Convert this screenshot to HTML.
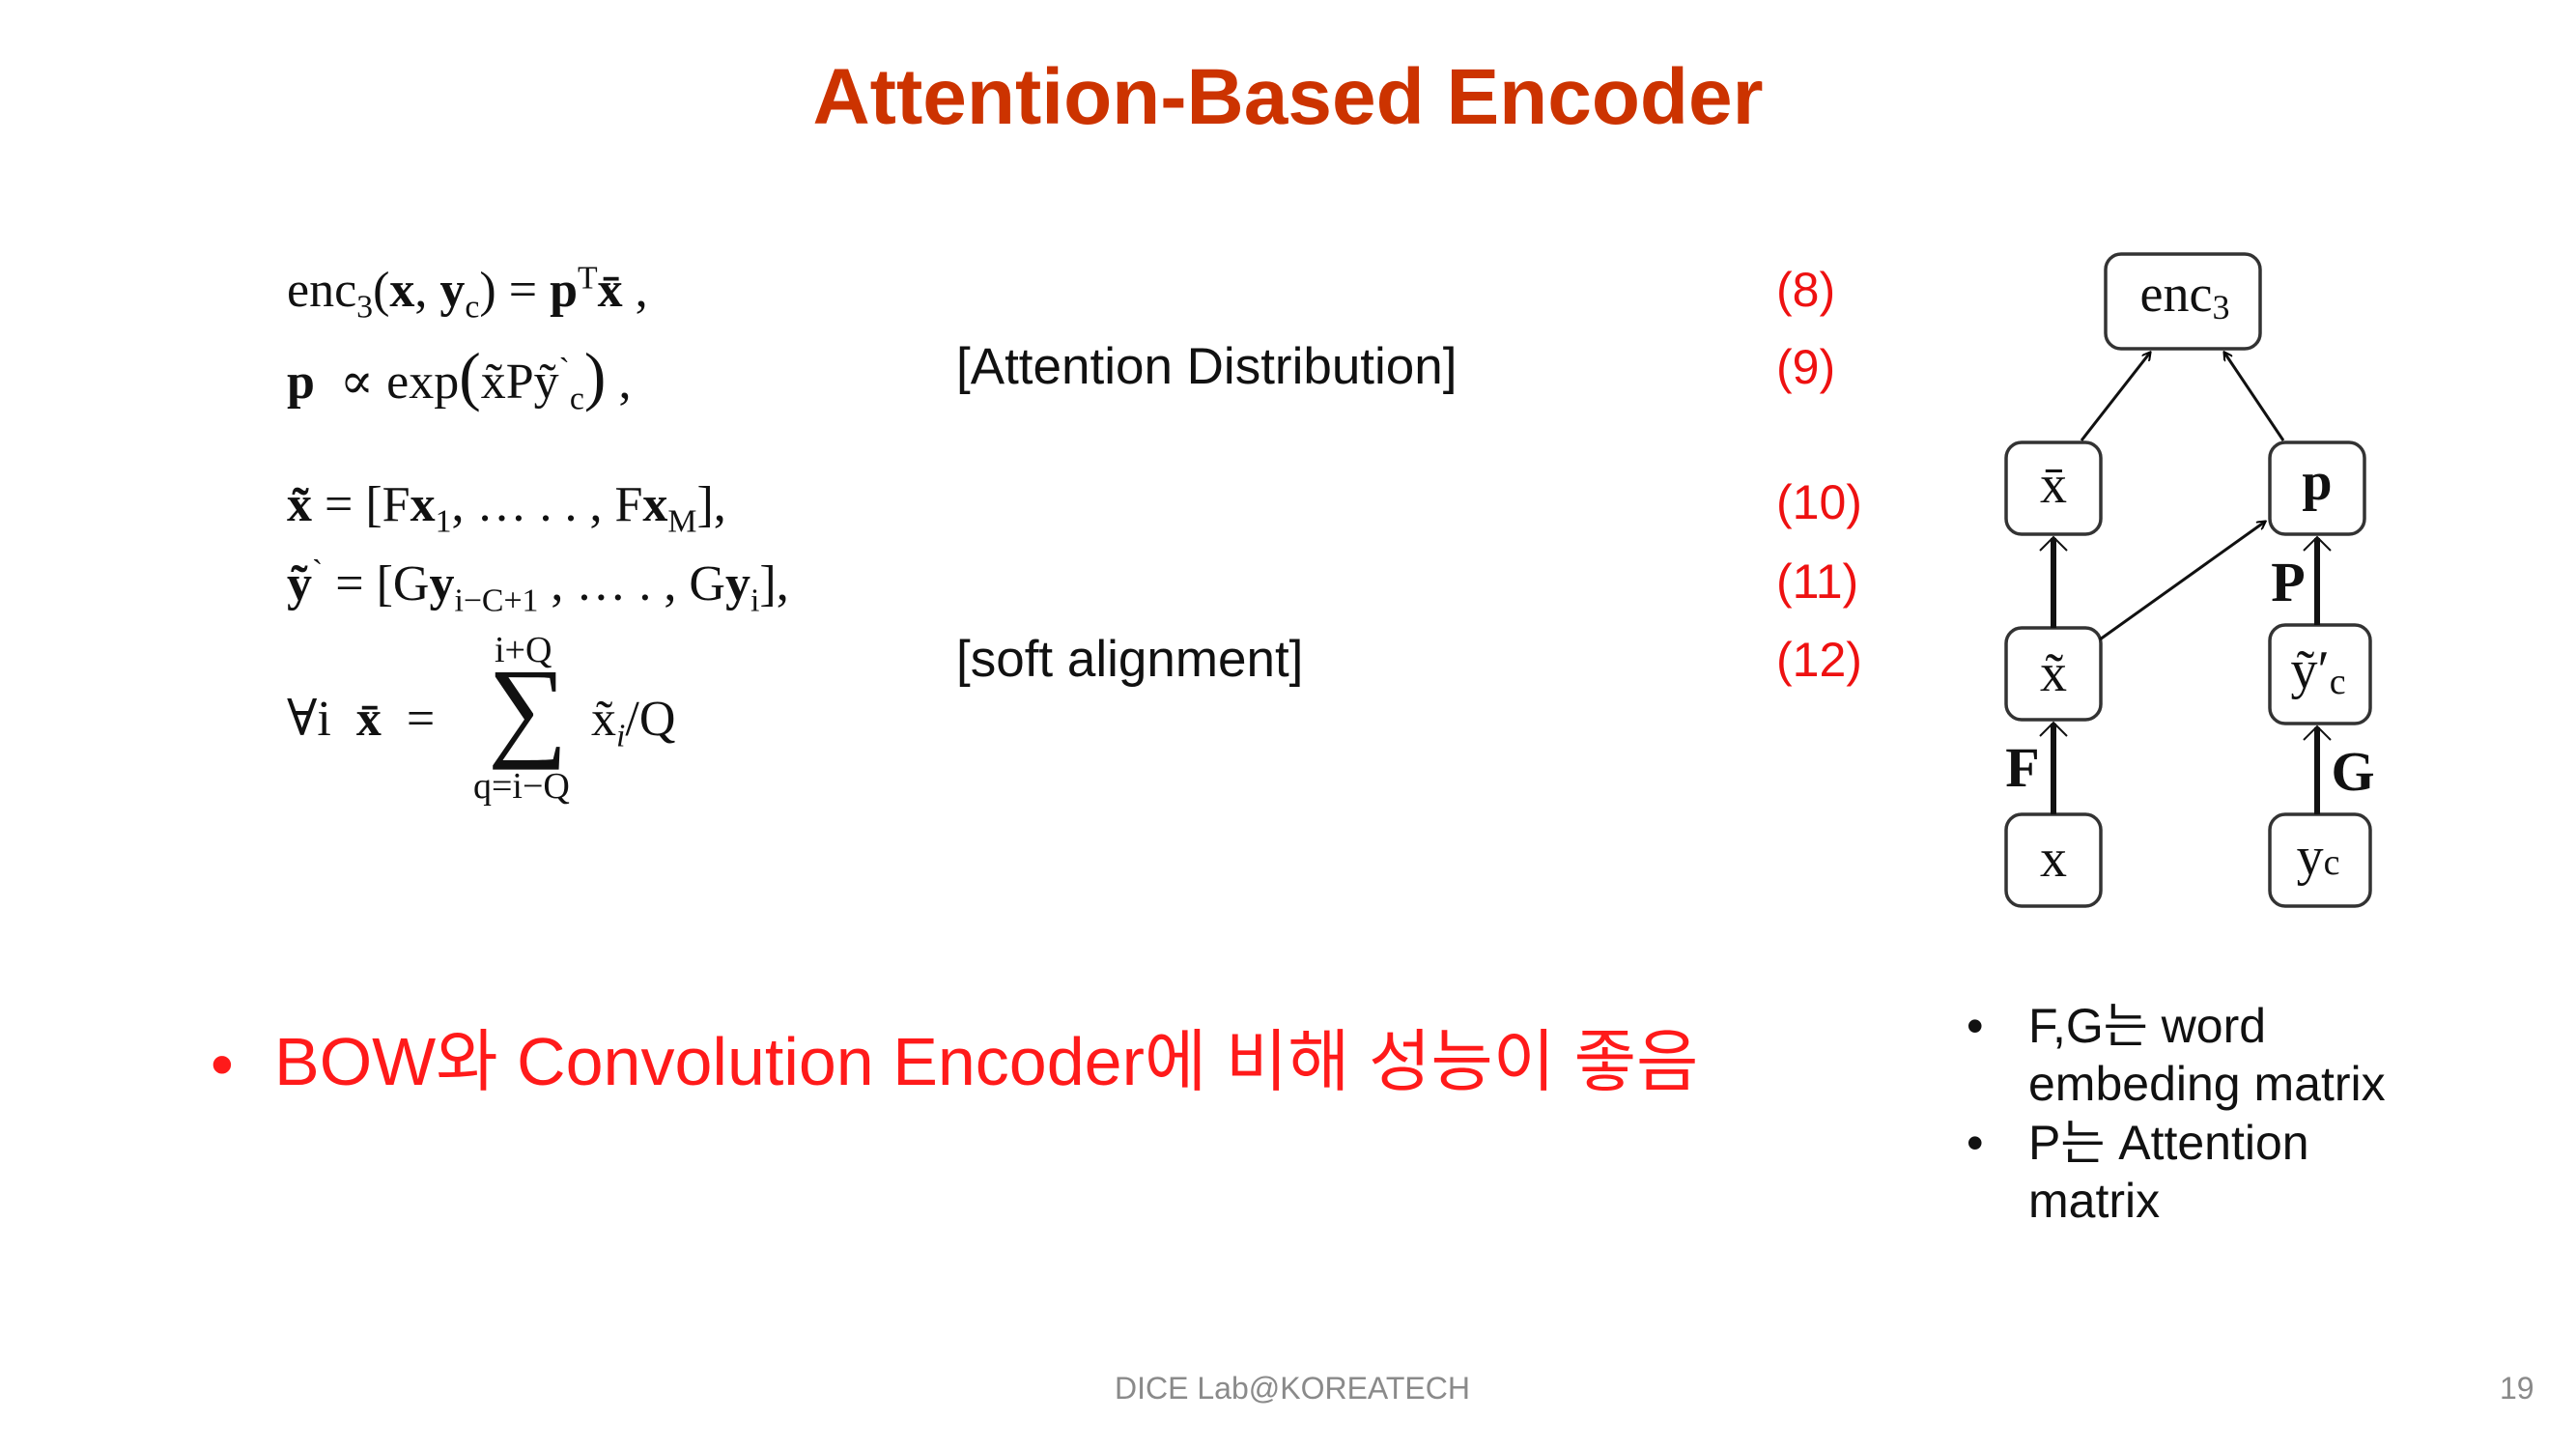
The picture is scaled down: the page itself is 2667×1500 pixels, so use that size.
<!DOCTYPE html>
<html><head><meta charset="utf-8"><style>
html,body{margin:0;padding:0;background:#fff;}
body{width:2667px;height:1500px;position:relative;overflow:hidden;font-family:"Liberation Sans","Noto Sans CJK KR",sans-serif;}
.a{position:absolute;white-space:nowrap;line-height:1;}
.m{font-family:"Liberation Serif","DejaVu Serif",serif;font-size:52px;color:#111;}
.lab{font-size:53px;color:#111;}
.num{font-size:50px;color:#ee1111;}
sub,sup{font-size:0.65em;line-height:0;}
b{font-weight:bold;}
</style></head><body>
<div class="a" style="left:0;width:2667px;text-align:center;top:60px;font-size:82px;font-weight:bold;color:#cc3300;">Attention-Based Encoder</div>

<div class="a m" style="left:297px;top:275px;">enc<sub>3</sub>(<b>x</b>, <b>y</b><sub>c</sub>) = <b>p</b><sup>T</sup><b>x̄</b> ,</div>
<div class="a m" style="left:297px;top:356px;"><b>p</b> &nbsp;∝ exp<span style="font-size:1.3em">(</span>x̃Pỹ<sup>`</sup><sub>c</sub><span style="font-size:1.3em">)</span> ,</div>
<div class="a m" style="left:297px;top:497px;"><b>x̃</b> = [F<b>x</b><sub>1</sub>, … . . , F<b>x</b><sub>M</sub>],</div>
<div class="a m" style="left:297px;top:579px;"><b>ỹ</b><sup>`</sup> = [G<b>y</b><sub>i−C+1</sub> , … . , G<b>y</b><sub>i</sub>],</div>
<div class="a m" style="left:297px;top:719px;">∀i &nbsp;<b>x̄</b> &nbsp;=</div>
<div class="a m" style="left:512px;top:654px;font-size:38px;">i+Q</div>
<div class="a m" style="left:505px;top:676px;font-size:116px;">∑</div>
<div class="a m" style="left:490px;top:795px;font-size:38px;">q=i−Q</div>
<div class="a m" style="left:612px;top:719px;">x̃<sub><i>i</i></sub>/Q</div>

<div class="a lab" style="left:990px;top:353px;">[Attention Distribution]</div>
<div class="a lab" style="left:990px;top:656px;">[soft alignment]</div>

<div class="a num" style="left:1839px;top:275px;">(8)</div>
<div class="a num" style="left:1839px;top:355px;">(9)</div>
<div class="a num" style="left:1839px;top:495px;">(10)</div>
<div class="a num" style="left:1839px;top:577px;">(11)</div>
<div class="a num" style="left:1839px;top:658px;">(12)</div>

<svg class="a" style="left:0;top:0" width="2667" height="1500">
<defs><marker id="ar" markerWidth="10" markerHeight="10" refX="8" refY="5" orient="auto" markerUnits="userSpaceOnUse"><path d="M0,0 L9,5 L0,10" fill="none" stroke="#000" stroke-width="2"/></marker></defs>
<g fill="#fff" stroke="#333" stroke-width="3.5">
<rect x="2180" y="263" width="160" height="98" rx="16"/>
<rect x="2077" y="458" width="98" height="95" rx="16"/>
<rect x="2350" y="458" width="98" height="95" rx="16"/>
<rect x="2077" y="650" width="98" height="95" rx="16"/>
<rect x="2350" y="647" width="104" height="102" rx="16"/>
<rect x="2077" y="843" width="98" height="95" rx="16"/>
<rect x="2350" y="843" width="104" height="95" rx="16"/>
</g>
<g stroke="#111" fill="none">
<line x1="2155" y1="456" x2="2226" y2="365" stroke-width="3" marker-end="url(#ar)"/>
<line x1="2364" y1="456" x2="2303" y2="365" stroke-width="3" marker-end="url(#ar)"/>
<line x1="2174" y1="662" x2="2345" y2="540" stroke-width="3" marker-end="url(#ar)"/>
<line x1="2126" y1="650" x2="2126" y2="557" stroke-width="6"/>
<line x1="2126" y1="843" x2="2126" y2="749" stroke-width="6"/>
<line x1="2399" y1="647" x2="2399" y2="557" stroke-width="6"/>
<line x1="2399" y1="843" x2="2399" y2="753" stroke-width="6"/>
<path d="M2112,570 L2126,556 L2140,570 M2112,762 L2126,748 L2140,762 M2385,570 L2399,556 L2413,570 M2385,766 L2399,752 L2413,766" stroke-width="2"/>
</g>
<g font-family="Liberation Serif,serif" fill="#111" text-anchor="middle">
<text x="2262" y="322" font-size="54">enc<tspan font-size="36" dy="8">3</tspan></text>
<text x="2126" y="520" font-size="56">x̄</text>
<text x="2399" y="517" font-size="56" font-weight="bold">p</text>
<text x="2126" y="715" font-size="56">x̃</text>
<text x="2400" y="712" font-size="56">ỹ′<tspan font-size="38" dy="6">c</tspan></text>
<text x="2126" y="907" font-size="56">x</text>
<text x="2400" y="905" font-size="56">y<tspan font-size="38">c</tspan></text>
<text x="2369" y="622" font-size="58" font-weight="bold">P</text>
<text x="2094" y="814" font-size="58" font-weight="bold">F</text>
<text x="2436" y="818" font-size="58" font-weight="bold">G</text>
</g>
</svg>

<div class="a" style="left:218px;top:1068px;font-size:68px;color:#ff1a1a;">•</div>
<div class="a" style="left:284px;top:1064px;font-size:70px;color:#ff1a1a;">BOW와 Convolution Encoder에 비해 성능이 좋음</div>

<div class="a" style="left:2036px;top:1037px;font-size:50px;color:#111;">•</div>
<div class="a" style="left:2100px;top:1037px;font-size:50px;color:#111;">F,G는 word</div>
<div class="a" style="left:2100px;top:1097px;font-size:50px;color:#111;">embeding matrix</div>
<div class="a" style="left:2036px;top:1158px;font-size:50px;color:#111;">•</div>
<div class="a" style="left:2100px;top:1158px;font-size:50px;color:#111;">P는 Attention</div>
<div class="a" style="left:2100px;top:1218px;font-size:50px;color:#111;">matrix</div>

<div class="a" style="left:0;width:2676px;text-align:center;top:1421px;font-size:32px;color:#8a8a8a;">DICE Lab@KOREATECH</div>
<div class="a" style="left:2588px;top:1421px;font-size:32px;color:#8a8a8a;">19</div>
</body></html>
